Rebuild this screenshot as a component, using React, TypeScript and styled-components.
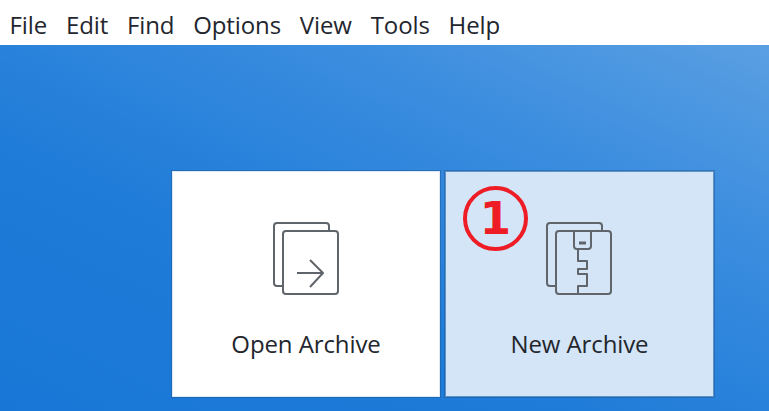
import React from 'react';
import styled, { createGlobalStyle } from 'styled-components';

const GlobalStyle = createGlobalStyle`
	html, body {
		margin: 0;
		padding: 0;
		background: #fff;
	}
`;

const Page = styled.div`
	width: 769px;
	height: 411px;
	display: flex;
	flex-direction: column;
	overflow: hidden;
	font-family: 'Open Sans', 'Noto Sans', sans-serif;
`;

const MenuBar = styled.nav`
	height: 45px;
	flex: none;
	box-sizing: border-box;
	padding: 8px 0 0 9.5px;
	display: flex;
	gap: 18.8px;
	background: #fff;
`;

const MenuItem = styled.span`
	font-size: 24px;
	line-height: 34px;
	letter-spacing: -0.1px;
	color: #23262e;
`;

const Desktop = styled.main`
	flex: 1;
	display: flex;
	gap: 5px;
	box-sizing: border-box;
	padding: 126px 0 14px 172px;
	background: linear-gradient(205deg, #5a9fe2 0%, #3b8ddf 28%, #1f7cd8 62%, #1876d6 100%);
`;

const Tile = styled.div<{ $active?: boolean }>`
	position: relative;
	width: ${({ $active }) => ($active ? 269 : 268)}px;
	box-sizing: border-box;
	display: flex;
	flex-direction: column;
	align-items: center;
	padding-top: 50px;
	background: ${({ $active }) => ($active ? '#d3e5f7' : '#fff')};
	box-shadow:
		inset 0 0 0 1px ${({ $active }) => ($active ? '#5f93c4' : '#dfe9f3')},
		0 0 0 1px rgba(30, 85, 145, 0.45);
`;

const IconBox = styled.svg<{ $shift: number }>`
	width: 68px;
	height: 74px;
	display: block;
	margin-left: ${({ $shift }) => $shift}px;
	fill: none;
	stroke: #5f656b;
	stroke-width: 2;
	stroke-linejoin: round;
`;

const TileLabel = styled.span`
	margin-top: 32px;
	font-size: 24px;
	line-height: 34px;
	letter-spacing: -0.1px;
	color: #23262c;
`;

const Badge = styled.span`
	position: absolute;
	left: 18px;
	top: 15px;
	width: 65px;
	height: 65px;
	box-sizing: border-box;
	border: 4px solid #ee1c25;
	border-radius: 50%;
	display: flex;
	align-items: center;
	justify-content: center;
	font-family: 'DejaVu Sans', sans-serif;
	font-weight: 700;
	font-size: 45px;
	line-height: 1;
	color: #ee1c25;
`;

const menus = ['File', 'Edit', 'Find', 'Options', 'View', 'Tools', 'Help'];

function OpenIcon(): JSX.Element {
	return (
		<IconBox $shift={-2} viewBox="0 0 68 74">
			<path d="M11 65H6a3 3 0 0 1-3-3V5a3 3 0 0 1 3-3h49a3 3 0 0 1 3 3v5" />
			<rect x="12" y="10" width="55" height="63" rx="3" />
			<path d="M26 52h26M39 39l13 13-13 14" />
		</IconBox>
	);
}

function ZipIcon(): JSX.Element {
	return (
		<IconBox $shift={-3} viewBox="0 0 68 74">
			<path d="M11 65H6a3 3 0 0 1-3-3V5a3 3 0 0 1 3-3h49a3 3 0 0 1 3 3v5" />
			<rect x="12" y="10" width="55" height="63" rx="3" />
			<path d="M30 10v15a3 3 0 0 0 3 3h11a3 3 0 0 0 3-3V10" />
			<path d="M35 22h7" strokeWidth="3" />
			<path d="M34 28v12h9v8h-9v5h9v12h-9v8" />
		</IconBox>
	);
}

export default function App(): JSX.Element {
	return (
		<Page>
			<GlobalStyle />
			<MenuBar>
				{menus.map((name) => (
					<MenuItem key={name}>{name}</MenuItem>
				))}
			</MenuBar>
			<Desktop>
				<Tile>
					<OpenIcon />
					<TileLabel>Open Archive</TileLabel>
				</Tile>
				<Tile $active>
					<Badge>1</Badge>
					<ZipIcon />
					<TileLabel>New Archive</TileLabel>
				</Tile>
			</Desktop>
		</Page>
	);
}
